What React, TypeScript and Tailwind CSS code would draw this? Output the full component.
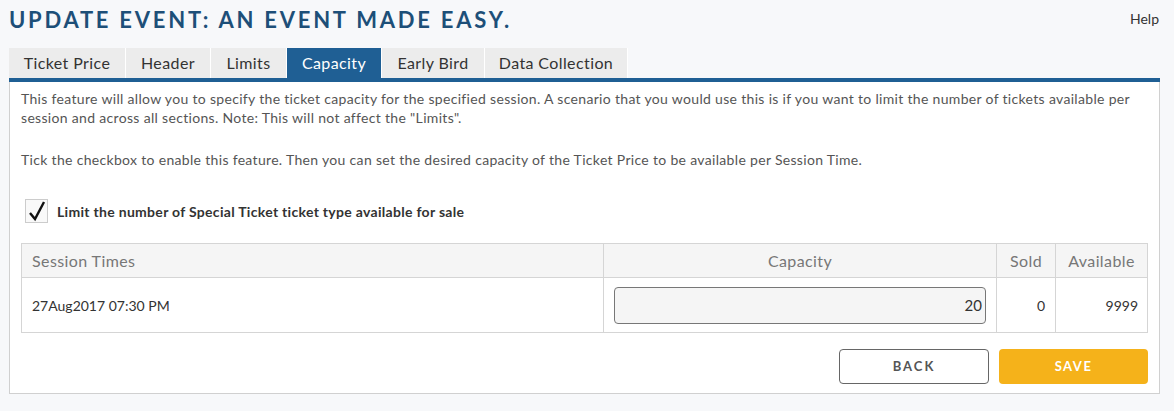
import React from "react";

const tabs = ["Ticket Price", "Header", "Limits", "Capacity", "Early Bird", "Data Collection"];
const tabW = [117, 85, 76, 95, 103, 143];

export default function App() {
  return (
    <div className="w-[1174px] h-[411px] bg-[#f7f8fa] font-['Lato',sans-serif] overflow-hidden">
      <div className="flex items-start justify-between pl-[9px] pr-[15px] pt-[5px] h-[48px]">
        <h1 className="text-[22px] font-bold tracking-[2.75px] text-[#1d4f78] leading-[30px]">
          UPDATE EVENT: AN EVENT MADE EASY.
        </h1>
        <a className="text-[14px] text-[#333] mt-[3px]">Help</a>
      </div>
      <div className="mx-[9px] w-[1151px]">
        <div className="flex h-[30px]">
          {tabs.map((t, i) => (
            <div
              key={t}
              style={{ width: tabW[i] }}
              className={
                "flex items-center justify-center text-[16px] tracking-[0.4px] border-r border-white " +
                (t === "Capacity" ? "bg-[#1f5f94] text-white" : "bg-[#ececec] text-[#333]")
              }
            >
              {t}
            </div>
          ))}
        </div>
        <div className="h-[4px] bg-[#1f5f94]" />
        <div className="bg-white border border-t-0 border-[#d0d0d0] h-[312px] pl-[11px] pr-[11px] pt-[7px]">
          <p className="text-[14px] tracking-[0.32px] leading-[19px] text-[#555]">
            This feature will allow you to specify the ticket capacity for the specified session. A scenario that you would use this is if you want to limit the number of tickets available per session and across all sections. Note: This will not affect the "Limits".
          </p>
          <p className="text-[14px] tracking-[0.32px] leading-[19px] text-[#555] mt-[23px]">
            Tick the checkbox to enable this feature. Then you can set the desired capacity of the Ticket Price to be available per Session Time.
          </p>
          <div className="flex items-center mt-[30px] ml-[4px]">
            <div className="w-[23px] h-[24px] border border-[#ccc] bg-[#f9f9f9] flex items-center justify-center">
              <svg width="20" height="22" viewBox="0 0 20 22">
                <path d="M3 13 L8 19 L17 2" fill="none" stroke="#111" strokeWidth="2.4" />
              </svg>
            </div>
            <span className="ml-[9px] text-[14px] tracking-[0.3px] font-bold text-[#333]">
              Limit the number of Special Ticket ticket type available for sale
            </span>
          </div>
          <table className="mt-[20px] w-[1127px] border-collapse text-[#333]">
            <thead>
              <tr className="bg-[#f5f5f5] h-[34px] text-[16px] tracking-[0.4px] text-[#777]">
                <th className="border border-[#d5d5d5] font-normal text-left pl-[10px] w-[582px]">Session Times</th>
                <th className="border border-[#d5d5d5] font-normal text-center w-[393px]">Capacity</th>
                <th className="border border-[#d5d5d5] font-normal text-center w-[59px]">Sold</th>
                <th className="border border-[#d5d5d5] font-normal text-center">Available</th>
              </tr>
            </thead>
            <tbody>
              <tr className="h-[55px] text-[14px]">
                <td className="border border-[#d5d5d5] pl-[10px]">27Aug2017 07:30 PM</td>
                <td className="border border-[#d5d5d5] px-[10px]">
                  <div className="h-[37px] rounded-[4px] border border-[#777] bg-[#f5f5f5] flex items-center justify-end pr-[3px] text-[15px] text-[#333]">
                    20
                  </div>
                </td>
                <td className="border border-[#d5d5d5] text-right pr-[10px]">0</td>
                <td className="border border-[#d5d5d5] text-right pr-[9px]">9999</td>
              </tr>
            </tbody>
          </table>
          <div className="flex justify-end gap-[10px] mt-[16px]">
            <button className="w-[150px] h-[35px] border border-[#666] rounded-[4px] bg-white text-[13px] font-bold tracking-[2px] text-[#555]">
              BACK
            </button>
            <button className="w-[149px] h-[35px] rounded-[4px] bg-[#f5b21a] text-[13px] font-bold tracking-[1.5px] text-white">
              SAVE
            </button>
          </div>
        </div>
      </div>
    </div>
  );
}
